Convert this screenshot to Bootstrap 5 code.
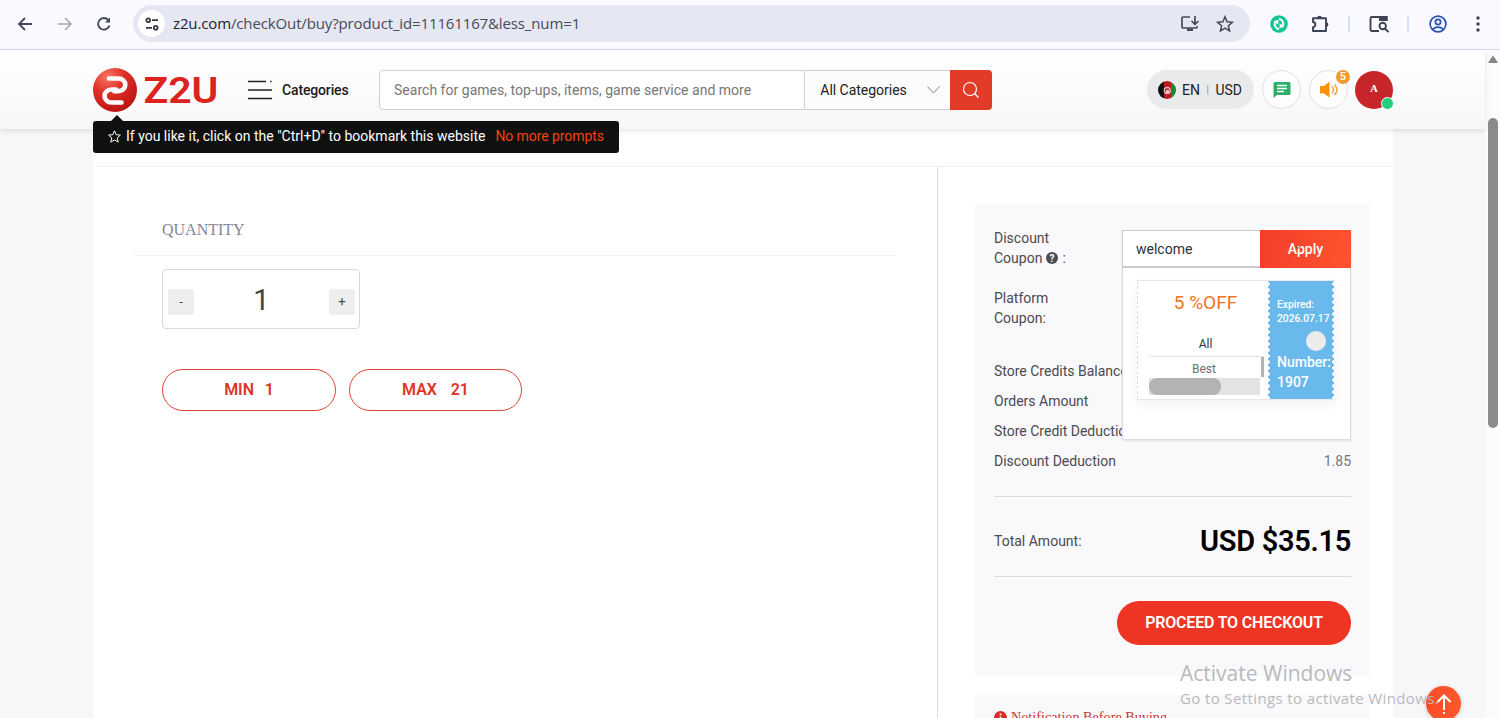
<!DOCTYPE html>
<html lang="en">
<head>
<meta charset="utf-8">
<meta name="viewport" content="width=device-width, initial-scale=1">
<title>Z2U Checkout</title>
<link href="https://cdn.jsdelivr.net/npm/bootstrap@5.3.0/dist/css/bootstrap.min.css" rel="stylesheet">
<style>
body{height:718px;overflow:hidden;background:#f7f7fa;font:14px/20px Roboto,sans-serif;color:#4a4a4f}
svg{display:block;flex:none}
.chrome-bar{height:50px;background:#faf9ff;border-bottom:1px solid #d8d9ec;padding:0 12px 2px 17px}
.omnibox{width:1117px;height:37px;margin-left:21px;background:#e5e7f2;border-radius:19px;padding:0 16px 0 5px}
.site-info{width:27px;height:27px;background:#fff;border-radius:50%}
.url{font:15px/22px "Open Sans",sans-serif;color:#474b58;margin:-2px 0 0 8px;white-space:nowrap;letter-spacing:-.13px}
.url b{font-weight:400;color:#20232c}
.chrome-sep{width:2px;height:16px;background:#d3e1fb}
.viewport-row{height:668px}
.site{width:1485px}
.site-head{height:79px;background:linear-gradient(#fff,#f7f7f7);box-shadow:0 2px 5px rgba(0,0,0,.1);padding:0 92px 0 93px;position:relative;z-index:2}
.cat{width:67px;margin-left:10px;font-weight:500;font-size:14px;letter-spacing:-.15px;color:#1a1a1a}
.search-box{width:613px;height:40px;margin-left:30px}
.search-box .q{width:427px;border:1px solid #ced0d4;border-radius:4px 0 0 4px;background:#fff;padding-left:14px;color:#777;letter-spacing:.02px}
.search-box .sel{width:145px;border:1px solid #ced0d4;border-width:1px 0;background:#fcfcfc;padding:0 10px 0 15px;color:#222;letter-spacing:-.02px}
.search-box .go{width:42px;background:#e03c27;border-radius:0 4px 4px 0}
.lang{width:107px;height:39px;background:#e9eaec;border-radius:20px;padding-left:11px;color:#222}
.round-btn{width:39px;height:39px;border:1px solid #dfe0e2;border-radius:50%;background:#fdfdfd;position:relative}
.count{position:absolute;top:-1px;right:-3px;width:14px;height:14px;border-radius:50%;background:#f39a33;color:#fff;font:500 11px/14px Roboto,sans-serif;text-align:center}
.avatar{width:38px;height:38px;border-radius:50%;background:#c62529;color:#fff;font:bold 11px/12px "Liberation Serif",serif;padding-bottom:3px;position:relative}
.avatar i{position:absolute;right:-1px;bottom:-1px;width:13px;height:13px;border-radius:50%;background:#20d080;border:1px solid #fff}
.bookmark-tip{position:absolute;left:93px;top:71px;width:526px;height:32px;background:#0f1010;border-radius:3px;color:#fff;padding:0 14px 2px 15px;white-space:nowrap}
.bookmark-tip::before{content:"";position:absolute;left:18px;top:-6px;border:6px solid transparent;border-top:0;border-bottom:6px solid #0f1010}
.bookmark-tip em{font-style:normal;color:#f4430f;margin-left:10px;letter-spacing:-.08px}
.sheet{width:1300px;height:589px;margin-left:93px;background:#fff}
.steps{height:38px;border-bottom:1px solid #f0f0f2}
.panes{height:551px;overflow:hidden}
.left-pane{flex:none;width:845px;border-right:1px solid #dcdcde;padding:46px 41px 0 40px}
.qty-title{height:43px;border-bottom:1px solid #f3f3f5;padding:7px 29px;font:16px/20px "Liberation Serif",serif;color:#85859a}
.qty-box{width:198px;height:60px;margin:13px 0 0 29px;border:1px solid #d8d9dd;border-radius:4px;padding:5px 4px 0 5px;background:#fff}
.qty-box span{width:26px;height:26px;background:#eeeeef;border-radius:3px;font-size:13px}
.qty-box strong{font:400 29px/30px Roboto,sans-serif;color:#414449;margin-top:-4px}
.pill{height:42px;border:1px solid #e04434;border-radius:21px;color:#dc3525;font-weight:600;font-size:16px;letter-spacing:-.05px;white-space:pre}
.right-pane{flex:none;padding:37px 0 0 37px}
.summary{width:395px;height:472px;background:#f9f9fc;padding:24px 19px 0;position:relative}
.summary p{margin:0}
.hl{border-top:1px solid #dadbdf}
.amount{font:600 29px/34px Roboto,sans-serif;color:#000;letter-spacing:-.3px}
.checkout{width:234px;height:44px;border-radius:22px;background:#ee3524;color:#fff;font-weight:600;font-size:16px;letter-spacing:-.18px}
.coupon-panel{position:absolute;left:147px;top:26px;width:229px;height:210px;background:#fff;border:1px solid #dcdde0;box-shadow:0 1px 2px rgba(0,0,0,.1)}
.coupon-panel .code{width:138px;height:38px;margin:-1px 0 0 -1px;border:1px solid #cbccd1;border-width:1px 0 2px 1px;padding:8px 0 0 13px;color:#2e3038;font-size:14px}
.coupon-panel .apply{width:91px;height:38px;margin:-1px -1px 0 0;background:linear-gradient(100deg,#f43e2b,#ff532d);color:#fff;font-weight:500;position:relative}
.apply svg{position:absolute;left:34px;top:15px}
.ticket{width:198px;height:120px;margin:12px 0 0 14px;border:1px solid #e7e7e9;border-width:1px 0;box-shadow:0 5px 12px rgba(0,0,0,.05)}
.t-left{width:131px;border-left:1px dashed #ddd;padding-left:11px}
.t-left .off{font-size:19px;line-height:22px;color:#ef7426;margin-top:11px;padding-right:6px;text-align:center}
.t-left .all{font-size:12px;line-height:16px;color:#2c3540;text-align:center;margin-top:22px;padding-right:6px}
.best{width:115px;height:22px;border-top:1px solid #e2e2e4;font-size:12px;line-height:25px;text-align:center;color:#6b7079;margin-top:4px;padding-right:5px;position:relative}
.best::after{content:"";position:absolute;right:0;top:0;width:3px;height:20px;background:#b3b3b3}
.hbar{width:111px;height:17px;background:#e3e3e3}
.hbar span{display:block;width:72px;height:17px;border-radius:8px;background:#b3b3b3}
.t-right{width:66px;height:118px;color:#fff;font-weight:500;padding:17px 0 0 9px;white-space:nowrap;background:radial-gradient(circle at 0 3px,#fff 1.6px,transparent 1.9px) 0 0/6px 6px repeat-y,radial-gradient(circle at 6px 3px,#fff 1.6px,transparent 1.9px) 100% 0/6px 6px repeat-y,#69b9ec}
.t-right small{display:block;font-size:10.3px;line-height:14px}
.t-right .dot{width:20px;height:20px;border-radius:50%;background:#ececec;margin:5px 0 0 29px}
.t-right .num{font-size:14px;line-height:20px;margin-top:1px}
.notice{width:395px;height:23px;margin-top:19px;background:#f9f9fc;padding:13px 19px 0;font:14.2px/18px "Liberation Serif",serif;color:#cc3434;white-space:nowrap}
.vscroll{width:15px;background:#fcfcfc}
.vscroll span{width:10px;height:310px;border-radius:5px;background:#8b8b8b;margin-top:54px;margin-left:1px}
.top-holder{position:absolute;left:1420px;top:680px;width:50px;height:38px;overflow:hidden;padding:6px}
.to-top{width:35px;height:35px;border-radius:50%;background:linear-gradient(100deg,#fb4a28,#ff5a2c);box-shadow:0 1px 4px rgba(0,0,0,.2)}
.activate{position:absolute;left:1180px;top:659px;color:#b9b9bc;font:15px/22px "Open Sans",sans-serif;letter-spacing:.38px;white-space:nowrap;z-index:3}
.activate div{font-size:21px;line-height:28px;letter-spacing:0}
</style>
</head>
<body class="position-relative">
<nav class="chrome-bar d-flex align-items-center">
  <svg width="16" height="16" fill="none" stroke="#42485a" stroke-width="1.8"><path d="M15 8H2M8 2 2 8l6 6"/></svg>
  <svg class="ms-4" width="16" height="16" fill="none" stroke="#a4a6b2" stroke-width="1.6"><path d="M1 8h13M8 2l6 6-6 6"/></svg>
  <svg style="margin-left:23px" width="16" height="16" fill="none" stroke="#42485a" stroke-width="1.9"><path d="M13.5 9.5A5.8 5.8 0 1 1 12.3 4"/><path d="M14 1.500v5H9z" fill="#42485a" stroke="none"/></svg>
  <div class="omnibox d-flex align-items-center">
    <span class="site-info d-flex align-items-center justify-content-center"><svg width="14" height="14" fill="none" stroke="#363a45" stroke-width="1.800"><circle cx="3.200" cy="3.200" r="1.900"/><circle cx="10.700" cy="10.800" r="1.900"/><path d="M7 3.200h6M1 10.800h6"/></svg></span>
    <span class="url"><b>z2u.com</b>/checkOut/buy?product_id=11161167&amp;less_num=1</span>
    <svg class="ms-auto" width="20" height="18" fill="none" stroke="#454a5a" stroke-width="1.700"><path d="M10 2H3q-1 0-1 1v9q0 1 1 1h13q1 0 1-1v-1M15 1v8M11.500 6 15 9.300l3.500-3.300"/><path d="M7 13.500h6v2.500H7z" fill="#454a5a" stroke="none"/></svg>
    <svg style="margin-left:16px" width="18" height="18" fill="none" stroke="#454a5a" stroke-width="1.500"><path d="m9 1.800 2.100 5 5.300.5-4 3.500 1.200 5.200L9 13.200 4.400 16l1.200-5.200-4-3.500 5.300-.5z"/></svg>
  </div>
  <svg style="margin-left:20px" width="18" height="18"><circle cx="9" cy="9" r="8.800" fill="#14c596"/><g fill="none" stroke="#fff" stroke-width="2"><path d="M9 14.200C5 13 3.600 9.500 5.600 6.500M9 3.800c4 1.200 5.400 4.700 3.400 7.700"/></g><path d="m3.600 6.300 5-1.600-.4 4.800zM14.400 11.700l-5 1.600.4-4.800z" fill="#fff"/></svg>
  <svg style="margin-left:22px" width="20" height="20" fill="none" stroke="#3d4354" stroke-width="1.900"><path d="M3 4.200h13V17H3v-3.700q2.300-.3 2.300-2.700T3 8z" stroke-linejoin="round"/><path d="M7.200 4a2.300 2.300 0 0 1 4.600 0zM16 8.200a2.400 2.400 0 0 1 0 4.800z" fill="#3d4354" stroke="none"/></svg>
  <i class="chrome-sep" style="margin-left:18px"></i>
  <svg style="margin-left:19px" width="20" height="18" fill="none" stroke="#3d4354" stroke-width="1.900"><path d="M10 16H3q-1.500 0-1.500-1.500v-11Q1.500 2 3 2h14.500v4"/><path d="M10 1h8.500v5H10z" fill="#3d4354" stroke="none"/><circle cx="13.700" cy="11" r="3.200"/><path d="m16 13.500 3.500 3.500"/></svg>
  <i class="chrome-sep" style="margin-left:18px"></i>
  <svg style="margin-left:20px" width="18" height="18" fill="none" stroke="#2850b4" stroke-width="1.700"><circle cx="9" cy="9" r="7.900"/><circle cx="9" cy="7" r="2.600"/><path d="M3.500 14.300q5.500-4.500 11 0"/></svg>
  <svg class="ms-auto" width="20" height="18" fill="#3d4354"><circle cx="10" cy="3" r="1.700"/><circle cx="10" cy="9" r="1.700"/><circle cx="10" cy="15" r="1.700"/></svg>
</nav>
<div class="viewport-row d-flex">
  <main class="site">
    <header class="site-head d-flex align-items-center">
      <svg width="126" height="46" viewBox="0 0 126 46"><defs><radialGradient id="ball" cx=".33" cy=".2" r=".85"><stop offset="0" stop-color="#fb7463"/><stop offset=".45" stop-color="#de3027"/><stop offset="1" stop-color="#ba1213"/></radialGradient></defs><circle cx="22" cy="23" r="22" fill="url(#ball)"/><path d="M16 11.500H25.500a6.800 6.300 0 0 1 0 12.600H21M28.500 35.500H18.500a6.800 6.300 0 0 1 0-13H23" fill="none" stroke="#fff" stroke-width="4.600" stroke-linecap="round" stroke-linejoin="round"/><text x="50.500" y="36" font-family="Roboto,sans-serif" font-weight="600" font-size="37.500" fill="#dc231d" textLength="75" lengthAdjust="spacingAndGlyphs">Z2U</text></svg>
      <svg style="margin-left:29px" width="24" height="20" stroke="#222" stroke-width="1.700"><path d="M0 1.500h18M22 1.500h1.500M0 10h24M0 18.500h24"/></svg>
      <span class="cat">Categories</span>
      <div class="search-box d-flex">
        <div class="q d-flex align-items-center">Search for games, top-ups, items, game service and more</div>
        <div class="sel d-flex align-items-center justify-content-between"><span>All Categories</span><svg width="13" height="8" fill="none" stroke="#888"><path d="m.5.5 6 6.500 6-6.500"/></svg></div>
        <div class="go d-flex align-items-center justify-content-center"><svg width="18" height="18" fill="none" stroke="#fff" stroke-width="1.200"><circle cx="8" cy="8" r="6.500"/><path d="m12.500 12.500 4 4"/></svg></div>
      </div>
      <div class="lang d-flex align-items-center ms-auto">
        <svg width="18" height="18"><defs><clipPath id="flag"><circle cx="9" cy="9" r="9"/></clipPath></defs><g clip-path="url(#flag)"><path fill="#111" d="M0 0h6v18H0z"/><path fill="#b81c20" d="M6 0h7v18H6z"/><path fill="#168a2c" d="M13 0h5v18h-5z"/></g><circle cx="9.300" cy="9.500" r="3" fill="none" stroke="#e5b5b3" stroke-width="1.300"/><path d="M8 9h3v3H8z" fill="#e8c4c0"/></svg>
        <span style="margin-left:6px">EN</span><span class="mx-auto" style="color:#888;font-size:10px">|</span><span style="padding-right:12px">USD</span>
      </div>
      <div class="round-btn d-flex align-items-center justify-content-center ms-2"><svg width="18" height="17"><path d="M2 1h14q1.500 0 1.500 1.500v10Q17.500 14 16 14H4l-3.500 3V2.500Q.5 1 2 1" fill="#2cae68"/><path d="M4 4.500h10M4 7.500h10M4 10.500h7" stroke="#fff" stroke-width="1.400"/></svg></div>
      <div class="round-btn d-flex align-items-center justify-content-center ms-2"><svg width="20" height="18"><path d="M1 5h4l5.500-4.500v16L5 12.500H1z" fill="#ff920b"/><path d="M13 5.500q3 3.300 0 6.500M15.500 3.500q5 5.200 0 10.500" fill="none" stroke="#f2a13f" stroke-width="1.400"/></svg><span class="count">5</span></div>
      <div class="avatar d-flex align-items-center justify-content-center" style="margin-left:7px">A<i></i></div>
      <div class="bookmark-tip d-flex align-items-center"><svg width="13" height="13" fill="none" stroke="#fff" stroke-width="1"><path d="m6.500.8 1.700 3.900 4.200.4-3.200 2.800 1 4.200-3.700-2.200L2.800 12.100l1-4.200L.6 5.100l4.200-.4z"/></svg><span style="margin-left:5px">If you like it, click on the "Ctrl+D" to bookmark this website</span><em>No more prompts</em></div>
    </header>
    <div class="sheet">
      <div class="steps"></div>
      <div class="panes d-flex">
        <section class="left-pane">
          <div class="qty-title">QUANTITY</div>
          <div class="qty-box d-flex align-items-center justify-content-between"><span class="d-flex align-items-center justify-content-center">-</span><strong>1</strong><span class="d-flex align-items-center justify-content-center">+</span></div>
          <div class="d-flex" style="margin:40px 0 0 29px;gap:13px"><div class="pill d-flex align-items-center justify-content-center" style="width:174px">MIN  <span style="margin-left:3px">1</span></div><div class="pill d-flex align-items-center justify-content-center" style="width:173px">MAX   <span style="margin-left:2px">21</span></div></div>
        </section>
        <aside class="right-pane">
          <div class="summary">
            <p>Discount</p>
            <p class="d-flex align-items-center">Coupon <svg class="mx-1" width="12" height="12"><circle cx="6" cy="6" r="6" fill="#4c4d52"/><text x="6" y="9.500" text-anchor="middle" fill="#fff" font-size="10" font-weight="700" font-family="Roboto">?</text></svg>:</p>
            <p style="margin-top:20px">Platform<br>Coupon:</p>
            <p style="margin-top:33px">Store Credits Balance</p>
            <p style="margin-top:10px">Orders Amount</p>
            <p style="margin-top:10px">Store Credit Deduction</p>
            <p class="d-flex justify-content-between" style="margin-top:10px"><span>Discount Deduction</span><span style="color:#75767b">1.85</span></p>
            <div class="hl" style="margin-top:25px"></div>
            <div class="d-flex align-items-center justify-content-between" style="height:79px;padding-top:8px"><span>Total Amount:</span><span class="amount">USD $35.15</span></div>
            <div class="hl"></div>
            <div class="checkout d-flex align-items-center justify-content-center ms-auto" style="margin-top:24px">PROCEED TO CHECKOUT</div>
            <div class="coupon-panel">
              <div class="d-flex justify-content-between"><div class="code">welcome</div><div class="apply d-flex align-items-center justify-content-center">Apply<svg width="9" height="5" fill="none" stroke="#555"><path d="m1 .5 3 3 3-3"/></svg></div></div>
              <div class="ticket d-flex">
                <div class="t-left"><div class="off">5 %OFF</div><div class="all">All</div><div class="best">Best</div><div class="hbar"><span></span></div></div>
                <div class="t-right"><small>Expired:</small><small>2026.07.17</small><div class="dot"></div><div class="num">Number:<br>1907</div></div>
              </div>
            </div>
          </div>
          <div class="notice d-flex"><svg class="me-1" style="margin-top:3px" width="13" height="13"><circle cx="6.500" cy="6.500" r="6.500" fill="#de2c25"/><path d="M6.500 5.500V10M6.500 2.500v1.700" stroke="#fff" stroke-width="1.700"/></svg>Notification Before Buying</div>
        </aside>
      </div>
    </div>
  </main>
  <div class="vscroll d-flex flex-column align-items-center"><svg style="margin-top:5px;margin-left:1px" width="10" height="9"><path d="M5 .5 9.500 7q.5 1-.5 1H1Q0 8 .5 7z" fill="#858585"/></svg><span></span></div>
</div>
<div class="top-holder"><div class="to-top d-flex align-items-center justify-content-center"><svg width="18" height="22" fill="none" stroke="#fff" stroke-width="2"><path d="M9 17V3M9 19v2M2.500 9 9 2.500 15.500 9"/></svg></div></div>
<div class="activate"><div>Activate Windows</div>Go to Settings to activate Windows.</div>
</body>
</html>
